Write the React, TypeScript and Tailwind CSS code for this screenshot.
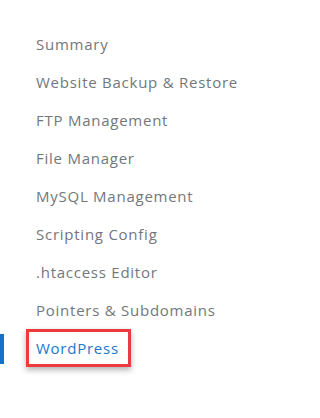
import React from 'react'

const items = [
    'Summary',
    'Website Backup & Restore',
    'FTP Management',
    'File Manager',
    'MySQL Management',
    'Scripting Config',
    '.htaccess Editor',
    'Pointers & Subdomains',
]

function App() {
    return (
        <div className="w-[300px] h-[418px] bg-white" style={{ fontFamily: '"Open Sans", "Liberation Sans", sans-serif' }}>
            <ul className="pt-[25px]">
                {items.map((item) => (
                    <li key={item} className="h-[38px] flex items-center pl-9 text-[15px] text-[#72777c] tracking-[0.75px]">
                        {item}
                    </li>
                ))}
                <li className="h-[38px] flex items-center relative">
                    <div className="absolute left-0 top-[5px] w-1 h-[30px] bg-[#1672c8]"></div>
                    <span className="ml-[26px] h-[38px] flex items-center pl-[7px] pr-[9px] border-[3px] border-[#ec3a40] shadow-[0_3px_6px_rgba(0,0,0,0.3)] text-[15px] text-[#2079cb] tracking-[0.75px]">
                        WordPress
                    </span>
                </li>
            </ul>
        </div>
    )
}

export default App
